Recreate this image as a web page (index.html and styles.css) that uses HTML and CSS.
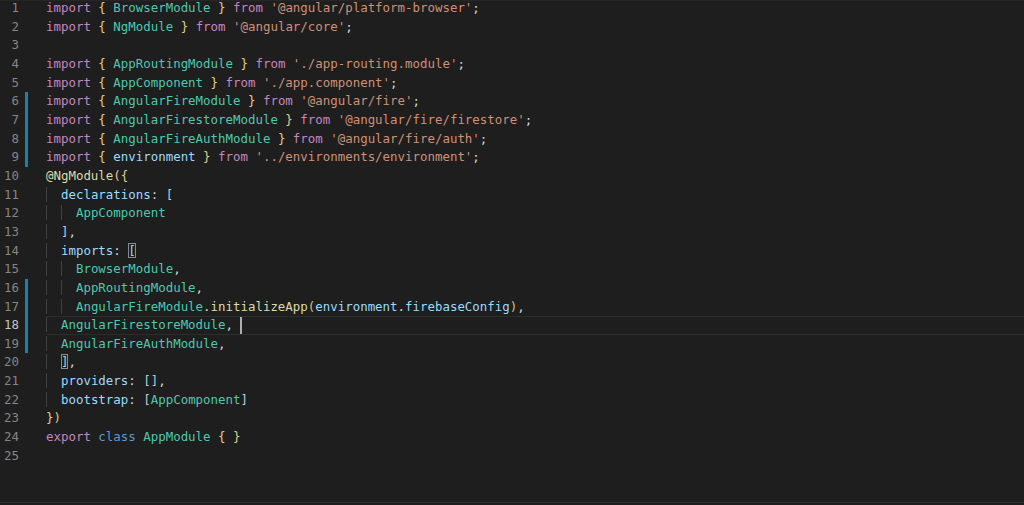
FILE: index.html
```html
<!DOCTYPE html>
<html lang="en">
<head>
    <meta charset="UTF-8">
    <meta name="viewport" content="width=device-width, initial-scale=1.0">
    <title>app.module.ts</title>
    <link rel="stylesheet" href="styles.css">
</head>
<body>
    <div class="editor">
        <div class="lines">
            <div class="line"><span class="ln">1</span><span class="diff"></span><span class="code"><span class="kw">import</span> <span class="br">{</span> <span class="cls">BrowserModule</span> <span class="br">}</span> <span class="kw">from</span> <span class="str">'@angular/platform-browser'</span>;</span></div>
            <div class="line"><span class="ln">2</span><span class="diff"></span><span class="code"><span class="kw">import</span> <span class="br">{</span> <span class="cls">NgModule</span> <span class="br">}</span> <span class="kw">from</span> <span class="str">'@angular/core'</span>;</span></div>
            <div class="line"><span class="ln">3</span><span class="diff"></span><span class="code"></span></div>
            <div class="line"><span class="ln">4</span><span class="diff"></span><span class="code"><span class="kw">import</span> <span class="br">{</span> <span class="cls">AppRoutingModule</span> <span class="br">}</span> <span class="kw">from</span> <span class="str">'./app-routing.module'</span>;</span></div>
            <div class="line"><span class="ln">5</span><span class="diff"></span><span class="code"><span class="kw">import</span> <span class="br">{</span> <span class="cls">AppComponent</span> <span class="br">}</span> <span class="kw">from</span> <span class="str">'./app.component'</span>;</span></div>
            <div class="line"><span class="ln">6</span><span class="diff on"></span><span class="code"><span class="kw">import</span> <span class="br">{</span> <span class="cls">AngularFireModule</span> <span class="br">}</span> <span class="kw">from</span> <span class="str">'@angular/fire'</span>;</span></div>
            <div class="line"><span class="ln">7</span><span class="diff on"></span><span class="code"><span class="kw">import</span> <span class="br">{</span> <span class="cls">AngularFirestoreModule</span> <span class="br">}</span> <span class="kw">from</span> <span class="str">'@angular/fire/firestore'</span>;</span></div>
            <div class="line"><span class="ln">8</span><span class="diff on"></span><span class="code"><span class="kw">import</span> <span class="br">{</span> <span class="cls">AngularFireAuthModule</span> <span class="br">}</span> <span class="kw">from</span> <span class="str">'@angular/fire/auth'</span>;</span></div>
            <div class="line"><span class="ln">9</span><span class="diff on"></span><span class="code"><span class="kw">import</span> <span class="br">{</span> <span class="var">environment</span> <span class="br">}</span> <span class="kw">from</span> <span class="str">'../environments/environment'</span>;</span></div>
            <div class="line"><span class="ln">10</span><span class="diff"></span><span class="code"><span class="fn">@NgModule</span><span class="br">({</span></span></div>
            <div class="line"><span class="ln">11</span><span class="diff"></span><span class="code"><span class="ind">  </span><span class="var">declarations</span>: <span class="sq">[</span></span></div>
            <div class="line"><span class="ln">12</span><span class="diff"></span><span class="code"><span class="ind">  </span><span class="ind">  </span><span class="cls">AppComponent</span></span></div>
            <div class="line"><span class="ln">13</span><span class="diff"></span><span class="code"><span class="ind">  </span><span class="sq">]</span>,</span></div>
            <div class="line"><span class="ln">14</span><span class="diff"></span><span class="code"><span class="ind">  </span><span class="var">imports</span>: <span class="sq match">[</span></span></div>
            <div class="line"><span class="ln">15</span><span class="diff"></span><span class="code"><span class="ind">  </span><span class="ind">  </span><span class="cls">BrowserModule</span>,</span></div>
            <div class="line"><span class="ln">16</span><span class="diff on"></span><span class="code"><span class="ind">  </span><span class="ind">  </span><span class="cls">AppRoutingModule</span>,</span></div>
            <div class="line"><span class="ln">17</span><span class="diff on"></span><span class="code"><span class="ind">  </span><span class="ind">  </span><span class="cls">AngularFireModule</span>.<span class="fn">initializeApp</span><span class="pr">(</span><span class="var">environment</span>.<span class="var">firebaseConfig</span><span class="pr">)</span>,</span></div>
            <div class="line current"><span class="ln">18</span><span class="diff on"></span><span class="code"><span class="ind">  </span><span class="cls">AngularFirestoreModule</span>, <span class="cursor"></span></span></div>
            <div class="line"><span class="ln">19</span><span class="diff on"></span><span class="code"><span class="ind">  </span><span class="cls">AngularFireAuthModule</span>,</span></div>
            <div class="line"><span class="ln">20</span><span class="diff"></span><span class="code"><span class="ind">  </span><span class="sq match">]</span>,</span></div>
            <div class="line"><span class="ln">21</span><span class="diff"></span><span class="code"><span class="ind">  </span><span class="var">providers</span>: <span class="sq">[]</span>,</span></div>
            <div class="line"><span class="ln">22</span><span class="diff"></span><span class="code"><span class="ind">  </span><span class="var">bootstrap</span>: <span class="sq">[</span><span class="cls">AppComponent</span><span class="sq">]</span></span></div>
            <div class="line"><span class="ln">23</span><span class="diff"></span><span class="code"><span class="br">})</span></span></div>
            <div class="line"><span class="ln">24</span><span class="diff"></span><span class="code"><span class="kw">export</span> <span class="key">class</span> <span class="cls">AppModule</span> <span class="br">{</span> <span class="br">}</span></span></div>
            <div class="line"><span class="ln">25</span><span class="diff"></span><span class="code"></span></div>
        </div>
    </div>
</body>
</html>
```

FILE: styles.css
```css
html, body {
    margin: 0;
    padding: 0;
    background-color: #1e1e1e;
}
body {
    height: 505px;
    overflow: hidden;
}
.editor {
    height: 501px;
    border-top: 1px solid #262626;
    border-bottom: 1px solid #303030;
    overflow: hidden;
    font-family: 'DejaVu Sans Mono', 'Liberation Mono', monospace;
    font-size: 12.43px;
    color: #d4d4d4;
}
.lines {
    margin-top: -2px;
}
.line {
    display: flex;
    height: 18.67px;
    line-height: 18.67px;
    white-space: pre;
}
.ln {
    width: 19px;
    text-align: right;
    color: #858585;
}
.current .ln {
    color: #c6c6c6;
}
.diff {
    width: 3px;
    margin-left: 6px;
    margin-right: 18px;
}
.diff.on {
    background-color: #1b81a8;
}
.code {
    flex: 1;
}
.current .code {
    box-shadow: inset 0 1px 0 #2c2c2c, inset 0 -1px 0 #2c2c2c;
}
.ind {
    box-shadow: inset 1px 0 0 #404040;
}
.kw { color: #c586c0; }
.key { color: #569cd6; }
.cls { color: #4ec9b0; }
.str { color: #ce9178; }
.var { color: #9cdcfe; }
.fn { color: #dcdcaa; }
.br { color: #e3cf8c; }
.pr { color: #d9c37f; }
.sq { color: #b6cde0; }
.match {
    box-shadow: inset 0 0 0 1px #8a8a8a;
    background-color: rgba(0, 100, 0, 0.1);
}
.cursor {
    display: inline-block;
    width: 2px;
    height: 17px;
    margin-right: -2px;
    vertical-align: middle;
    background-color: #aeafad;
}
```
